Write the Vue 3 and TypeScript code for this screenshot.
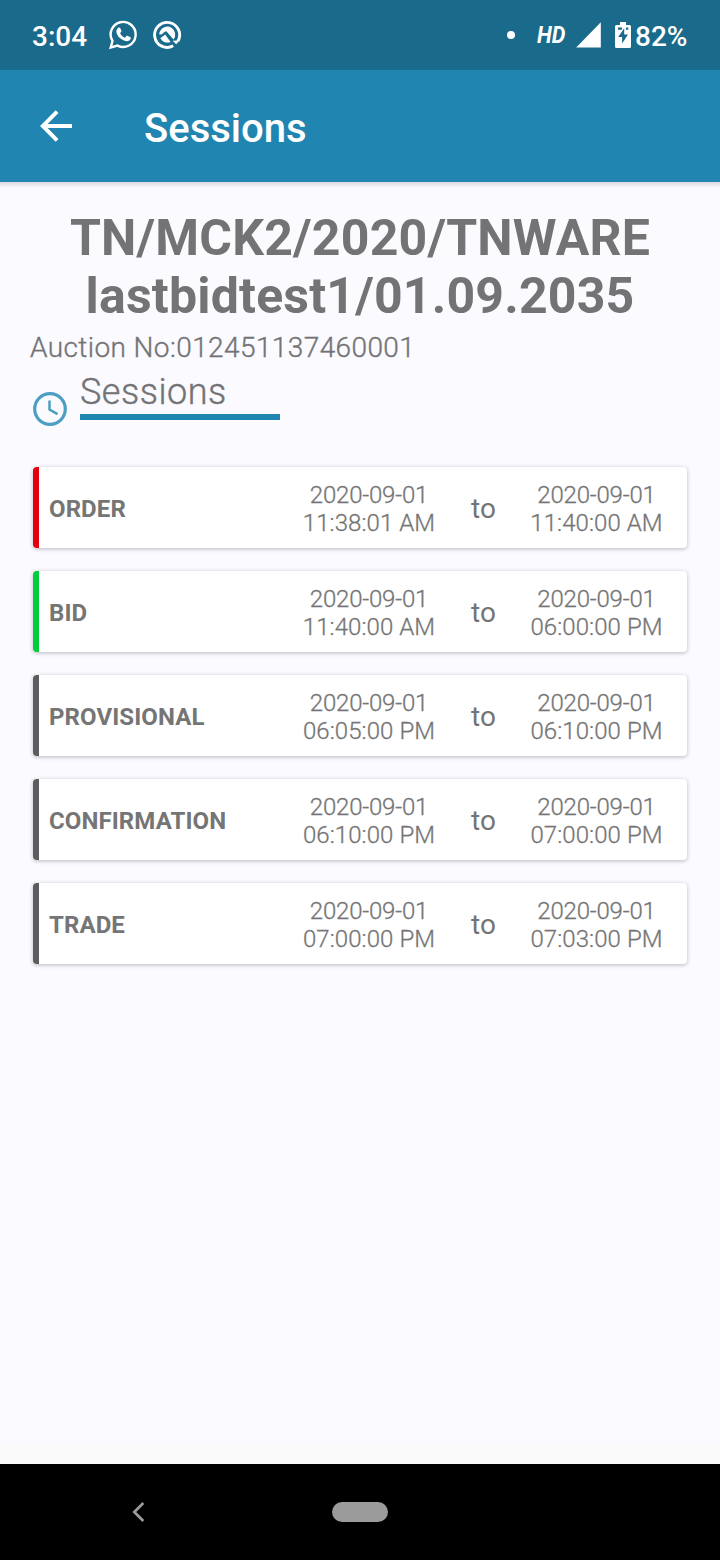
<script setup lang="ts">
interface Moment {
  date: string
  time: string
}

interface Session {
  name: string
  start: Moment
  end: Moment
  state: 'closed' | 'active' | 'pending'
}

const day = '2020-09-01'
const at = (time: string): Moment => ({ date: day, time })

const sessions: Session[] = [
  { name: 'ORDER', start: at('11:38:01 AM'), end: at('11:40:00 AM'), state: 'closed' },
  { name: 'BID', start: at('11:40:00 AM'), end: at('06:00:00 PM'), state: 'active' },
  { name: 'PROVISIONAL', start: at('06:05:00 PM'), end: at('06:10:00 PM'), state: 'pending' },
  { name: 'CONFIRMATION', start: at('06:10:00 PM'), end: at('07:00:00 PM'), state: 'pending' },
  { name: 'TRADE', start: at('07:00:00 PM'), end: at('07:03:00 PM'), state: 'pending' },
]
</script>

<template>
  <div class="screen">
    <div class="status-bar">
      <span class="clock">3:04</span>
      <svg class="whatsapp" width="30" height="32" viewBox="0 0 30 32">
        <path d="M2.7 28.5 L4.5 22 A12.5 12.5 0 1 1 9.5 26.600 Z" fill="none" stroke="#fff" stroke-width="2.400" stroke-linejoin="miter" />
        <path d="M10.300 8.700c.7-.5 1.6-.4 1.900.3l1.200 2.800c.2.5 0 .9-.4 1.300l-.9 1.100c1.100 2.100 2.700 3.500 4.800 4.500l1.500-1.600c.3-.4.7-.5 1.100-.3l2.800 1.400c.5.3.6.6.4 1.300-.5 1.900-2.200 2.800-4 2.700-5.400-.7-9.500-4.700-10.300-9.100-.2-1.800.6-3.500 1.900-4.400z" fill="#fff" />
      </svg>
      <svg class="ring-icon" width="30" height="30" viewBox="0 0 30 30">
        <path d="M21.200 25.800A12.500 12.500 0 1 1 25.900 21.200" fill="none" stroke="#fff" stroke-width="2.900" />
        <path d="M25 20.400L26.600 21.600L24.300 24.300L20.600 20.700" fill="#fff" />
        <path d="M8 11.200A8 8 0 1 1 21.500 19.600L14.600 11.500Q13.700 10.700 12.700 11.700L9.500 14.600L7.100 14.200Q7.300 12.500 8 11.200Z" fill="#fff" />
        <path d="M8.300 18.300L13.200 14.600L18.600 21.900A8 8 0 0 1 8.300 18.300Z" fill="#fff" />
      </svg>
      <span class="dot"></span>
      <span class="hd">HD</span>
      <svg class="signal" width="26" height="26" viewBox="0 0 26 26">
        <path d="M24.800 .3V25.500H.2Z" fill="#fff" />
      </svg>
      <svg class="battery" width="16" height="26" viewBox="0 0 16 26">
        <path d="M5 0h6v3h3.500q1.500 0 1.500 1.500v20q0 1.500-1.500 1.500h-13q-1.500 0-1.500-1.500v-20q0-1.500 1.500-1.500h3.500z" fill="#fff" />
        <path d="M9.200 6.300L3.200 15h3.900v6.500L13 12.600H9.200z" fill="#196a8b" />
        <path d="M3 5.500h4v2.300H3zM11 5.500h2.300v2.300H11z" fill="#196a8b" />
      </svg>
      <span class="percent">82%</span>
    </div>

    <header class="app-bar">
      <svg class="back" width="34" height="34" viewBox="0 0 34 34">
        <path d="M33 17H4.500M18.100 2.700L3.800 17L18.100 31.300" fill="none" stroke="#fff" stroke-width="3.900" />
      </svg>
      <span class="app-title">Sessions</span>
    </header>

    <main class="content">
      <h1 class="auction-title">TN/MCK2/2020/TNWARE<br />lastbidtest1/01.09.2035</h1>
      <p class="auction-number">Auction No:012451137460001</p>
      <div class="section-head">
        <svg class="clock-icon" width="34" height="34" viewBox="0 0 34 34">
          <circle cx="17" cy="17" r="15.300" fill="none" stroke="#4c9fc1" stroke-width="3.200" />
          <path d="M16.500 8.500V17.500L24.500 22.200" fill="none" stroke="#4c9fc1" stroke-width="2.500" />
        </svg>
        <h2 class="section-title">Sessions</h2>
      </div>

      <ul class="list">
        <li v-for="s in sessions" :key="s.name" class="card" :class="s.state">
          <span class="name">{{ s.name }}</span>
          <span class="moment"><span class="date">{{ s.start.date }}</span><span class="time">{{ s.start.time }}</span></span>
          <span class="to">to</span>
          <span class="moment"><span class="date">{{ s.end.date }}</span><span class="time">{{ s.end.time }}</span></span>
        </li>
      </ul>
    </main>

    <nav class="nav-bar">
      <svg class="nav-back" width="14" height="22" viewBox="0 0 14 22">
        <path d="M11.300 2L2.300 11L11.300 20" fill="none" stroke="#9b9b9b" stroke-width="2.700" />
      </svg>
      <span class="home-pill"></span>
    </nav>
  </div>
</template>

<style>
body {
  margin: 0;
}
</style>

<style scoped>
.screen {
  display: flex;
  flex-direction: column;
  width: 720px;
  height: 1560px;
  overflow: hidden;
  background: #fafaff;
  color: #737375;
  font-family: Roboto, "Liberation Sans", sans-serif;
}

.status-bar {
  display: flex;
  align-items: center;
  box-sizing: border-box;
  flex: none;
  height: 70px;
  padding-left: 32px;
  background: #196a8b;
  color: #fff;
}

.clock {
  width: 55px;
  margin-top: 3px;
  font-size: 28px;
  font-weight: 500;
  line-height: 34px;
}

.whatsapp {
  margin-left: 21px;
}

.ring-icon {
  margin-left: 14px;
}

.dot {
  width: 8px;
  height: 8px;
  margin-left: 325px;
  border-radius: 50%;
  background: #fff;
}

.hd {
  width: 31px;
  margin: 0 0 0 22px;
  font-size: 24px;
  font-style: italic;
  font-weight: 700;
  line-height: 30px;
  transform: scaleX(0.9);
  transform-origin: left center;
}

.signal {
  margin-left: 8px;
}

.battery {
  margin-left: 13px;
}

.percent {
  margin: 3px 0 0 4px;
  font-size: 28px;
  font-weight: 500;
  line-height: 34px;
}

.app-bar {
  display: flex;
  align-items: center;
  flex: none;
  height: 112px;
  padding-left: 39px;
  background: #2085b0;
  color: #fff;
}

.app-title {
  margin: 6px 0 0 71px;
  font-size: 40px;
  font-weight: 500;
  line-height: 48px;
}

.content {
  flex: 1;
  padding: 27px 30px 0;
  background:
    linear-gradient(rgba(0, 0, 0, 0.13), rgba(0, 0, 0, 0)) top / 100% 6px no-repeat,
    linear-gradient(#fafaff calc(100% - 24px), #fafafa calc(100% - 14px));
}

.auction-title {
  margin: 0;
  font-size: 50px;
  font-weight: 700;
  letter-spacing: 0.2px;
  line-height: 58px;
  text-align: center;
}

.auction-number {
  margin: 6px 0 0;
  font-size: 28px;
  font-weight: 300;
  letter-spacing: 0.4px;
  line-height: 34px;
  -webkit-text-stroke: 0.35px currentColor;
}

.section-head {
  display: flex;
  align-items: flex-end;
  height: 61px;
  padding-left: 3px;
}

.section-title {
  box-sizing: border-box;
  width: 200px;
  height: 48px;
  margin: 0 0 6px 13px;
  border-bottom: 6px solid #2085b0;
  font-size: 36px;
  font-weight: 300;
  letter-spacing: 0.5px;
  line-height: 40px;
  -webkit-text-stroke: 0.4px currentColor;
}

.list {
  display: flex;
  flex-direction: column;
  gap: 23px;
  margin: 41px 0 0;
  padding: 0 3px;
  list-style: none;
}

.card {
  display: grid;
  grid-template-columns: 240px 180px 48px 179px;
  align-items: center;
  box-sizing: border-box;
  height: 81px;
  padding-top: 2px;
  border-left: 6px solid #5c5c5e;
  border-radius: 4px;
  background: #fff;
  box-shadow: 0 1px 4px rgba(0, 0, 0, 0.27);
  color: #757575;
}

.card.closed {
  border-left-color: #e3000f;
}

.card.active {
  border-left-color: #00cc3c;
}

.name {
  padding-left: 10px;
  font-size: 24px;
  font-weight: 700;
  letter-spacing: 0.1px;
  line-height: 28px;
}

.moment {
  display: flex;
  flex-direction: column;
  font-size: 24px;
  font-weight: 300;
  line-height: 28px;
  text-align: center;
  -webkit-text-stroke: 0.3px currentColor;
}

.date {
  letter-spacing: -0.2px;
}

.time {
  letter-spacing: 0.08px;
}

.to {
  padding-left: 1px;
  font-size: 28px;
  line-height: 32px;
  text-align: center;
}

.nav-bar {
  display: flex;
  align-items: center;
  flex: none;
  height: 96px;
  padding-left: 132px;
  background: #000;
}

.home-pill {
  width: 56px;
  height: 20px;
  margin-left: 186px;
  border-radius: 10px;
  background: #9b9b9b;
}
</style>
